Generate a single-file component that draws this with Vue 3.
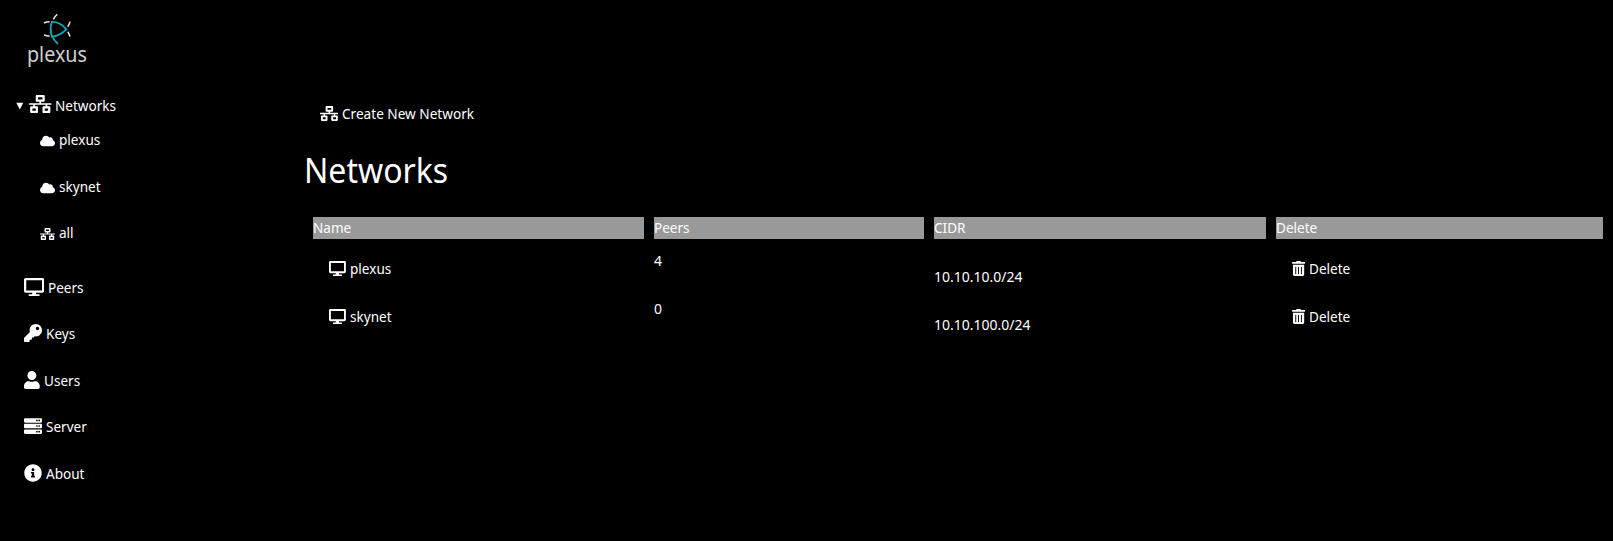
<script setup>
import { h } from 'vue'

const server = [32, 192, 352]
  .map(
    (y) =>
      `M480 ${y + 128}H32c-17.7 0-32-14.3-32-32v-64c0-17.7 14.3-32 32-32h448c17.7 0 32 14.3 32 32v64c0 17.7-14.3 32-32 32z` +
      `M432 ${y + 40}a24 24 0 1 0 0 48a24 24 0 1 0 0-48zM368 ${y + 40}a24 24 0 1 0 0 48a24 24 0 1 0 0-48z`
  )
  .join('')

const icons = {
  network: [640, 'M640 264v-16c0-8.84-7.16-16-16-16H344v-40h72c17.67 0 32-14.33 32-32V32c0-17.67-14.33-32-32-32H224c-17.67 0-32 14.33-32 32v128c0 17.67 14.33 32 32 32h72v40H16c-8.84 0-16 7.16-16 16v16c0 8.84 7.16 16 16 16h104v40H64c-17.67 0-32 14.33-32 32v128c0 17.67 14.33 32 32 32h160c17.67 0 32-14.33 32-32V352c0-17.67-14.33-32-32-32h-56v-40h304v40h-56c-17.67 0-32 14.33-32 32v128c0 17.67 14.33 32 32 32h160c17.67 0 32-14.33 32-32V352c0-17.67-14.33-32-32-32h-56v-40h104c8.84 0 16-7.16 16-16zM256 128V64h128v64H256zm-64 320H96v-64h96v64zm352 0h-96v-64h96v64z'],
  desktop: [576, 'M528 0H48C21.5 0 0 21.5 0 48v320c0 26.5 21.5 48 48 48h192l-16 48h-72c-13.3 0-24 10.7-24 24s10.7 24 24 24h272c13.3 0 24-10.7 24-24s-10.7-24-24-24h-72l-16-48h192c26.5 0 48-21.5 48-48V48c0-26.5-21.5-48-48-48zm-16 352H64V64h448v288z'],
  key: [512, 'M512 176C512 273.2 433.2 352 336 352c-11.2 0-22.2-1.1-32.8-3.1l-24 27A24 24 0 0 1 261.2 384H224v40c0 13.3-10.7 24-24 24h-40v40c0 13.3-10.7 24-24 24H24c-13.3 0-24-10.7-24-24v-78.1c0-6.4 2.5-12.4 7-17l161.8-161.8C163.1 213.8 160 195.3 160 176 160 78.8 238.8 0 336 0 433.5 0 512 78.5 512 176zM336 128c0 26.5 21.5 48 48 48s48-21.5 48-48-21.5-48-48-48-48 21.5-48 48z'],
  user: [448, 'M224 256c70.7 0 128-57.3 128-128S294.7 0 224 0 96 57.3 96 128s57.3 128 128 128zm89.6 32h-16.7c-22.2 10.2-46.9 16-72.9 16s-50.6-5.8-72.9-16h-16.7C60.2 288 0 348.2 0 422.4V464c0 26.5 21.5 48 48 48h352c26.5 0 48-21.5 48-48v-41.6c0-74.2-60.2-134.4-134.4-134.4z'],
  server: [512, server],
  info: [512, 'M256 8C119 8 8 119.1 8 256c0 137 111 248 248 248s248-111 248-248C504 119.1 393 8 256 8zm0 110c23.2 0 42 18.8 42 42s-18.8 42-42 42-42-18.8-42-42 18.8-42 42-42zm56 254c0 6.6-5.4 12-12 12h-88c-6.6 0-12-5.4-12-12v-24c0-6.6 5.4-12 12-12h12v-64h-12c-6.6 0-12-5.4-12-12v-24c0-6.6 5.4-12 12-12h64c6.6 0 12 5.4 12 12v100h12c6.6 0 12 5.4 12 12v24z'],
  cloud: [640, 'M537.6 226.6c4.1-10.7 6.4-22.4 6.4-34.6 0-53-43-96-96-96-19.7 0-38.1 6-53.3 16.2C367 64.2 315.3 32 256 32c-88.4 0-160 71.6-160 160 0 2.7.1 5.4.2 8.1C40.2 219.8 0 273.2 0 336c0 79.5 64.5 144 144 144h368c70.7 0 128-57.3 128-128 0-61.9-44-113.6-102.4-125.4z'],
  trash: [448, 'M32 464a48 48 0 0 0 48 48h288a48 48 0 0 0 48-48V128H32zm272-256a16 16 0 0 1 32 0v224a16 16 0 0 1-32 0zm-96 0a16 16 0 0 1 32 0v224a16 16 0 0 1-32 0zm-96 0a16 16 0 0 1 32 0v224a16 16 0 0 1-32 0zM432 32H312l-9.4-18.7A24 24 0 0 0 281.1 0H166.8a23.7 23.7 0 0 0-21.4 13.3L136 32H16A16 16 0 0 0 0 48v32a16 16 0 0 0 16 16h416a16 16 0 0 0 16-16V48a16 16 0 0 0-16-16z']
}

const Icon = ({ name, size }) =>
  h(
    'svg',
    { viewBox: `0 0 ${icons[name][0]} 512`, width: (icons[name][0] / 512) * size, height: size, fill: 'currentColor' },
    [h('path', { d: icons[name][1], 'fill-rule': 'evenodd' })]
  )
Icon.props = ['name', 'size']

const subnets = [
  { label: 'plexus', icon: 'cloud' },
  { label: 'skynet', icon: 'cloud' },
  { label: 'all', icon: 'network' }
]
const menu = [
  { label: 'Peers', icon: 'desktop' },
  { label: 'Keys', icon: 'key' },
  { label: 'Users', icon: 'user' },
  { label: 'Server', icon: 'server' },
  { label: 'About', icon: 'info' }
]
const networks = [
  { name: 'plexus', peers: 4, cidr: '10.10.10.0/24' },
  { name: 'skynet', peers: 0, cidr: '10.10.100.0/24' }
]
const columns = ['Name', 'Peers', 'CIDR', 'Delete']
</script>

<template>
  <div class="page">
    <aside class="sidebar">
      <div class="logo">
        <svg class="mark" viewBox="0 0 84 96" width="28" height="32" fill="none">
          <g stroke="#10aabb" stroke-width="5.5" stroke-linecap="round">
            <path d="M27 26Q52 27 70 49Q52 68 27 71Q19 48 27 26" />
            <path d="M28 70Q32 82 43 91" />
          </g>
          <g stroke="#e4e4dc" stroke-width="4.5">
            <path d="M31 19Q35 10 43 4" />
            <path d="M3 30Q10 26 20 26" />
            <path d="M3 66Q10 69 20 70" />
            <path d="M74 41Q79 35 81 26" />
            <path d="M74 56Q79 62 81 71" />
          </g>
        </svg>
        <span class="wordmark">plexus</span>
      </div>

      <div class="row summary">
        <svg class="caret" viewBox="0 0 8 8" width="8" height="8"><path d="M.3.7H7.3L3.8 7.5z" fill="#fff" /></svg>
        <Icon name="network" :size="18" />
        <span class="text">Networks</span>
      </div>
      <nav class="subnav">
        <a v-for="s in subnets" :key="s.label" class="row">
          <Icon :name="s.icon" :size="12" /><span class="text">{{ s.label }}</span>
        </a>
      </nav>
      <nav class="menu">
        <a v-for="m in menu" :key="m.label" class="row">
          <Icon :name="m.icon" :size="18" /><span class="text">{{ m.label }}</span>
        </a>
      </nav>
    </aside>

    <main class="content">
      <a class="row create"><Icon name="network" :size="15" /><span class="text">Create New Network</span></a>
      <h1><span class="text">Networks</span></h1>
      <div class="grid head">
        <div v-for="c in columns" :key="c" class="cell"><span class="text">{{ c }}</span></div>
      </div>
      <div v-for="n in networks" :key="n.name" class="grid line">
        <a class="row action"><Icon name="desktop" :size="15" /><span class="text">{{ n.name }}</span></a>
        <div class="peers"><span class="text">{{ n.peers }}</span></div>
        <div class="cidr"><span class="text">{{ n.cidr }}</span></div>
        <a class="row action"><Icon name="trash" :size="15" /><span class="text">Delete</span></a>
      </div>
    </main>
  </div>
</template>

<style>
body {
  margin: 0;
  background: #000;
}
</style>

<style scoped>
.page {
  display: flex;
  height: 541px;
  overflow: hidden;
  background: #000;
  color: #fff;
  font: 14.5px/22px 'Noto Sans', 'Open Sans', sans-serif;
}
.text {
  display: inline-block;
  white-space: nowrap;
  transform: scaleX(0.935);
  transform-origin: left;
}
.row {
  display: flex;
  align-items: flex-start;
  height: 22px;
  gap: 4px;
}
.row svg {
  flex: none;
  margin-top: 2px;
}
.sidebar {
  flex: none;
  width: 304px;
}
.logo {
  height: 80px;
  padding: 13px 0 0 26.5px;
  box-sizing: border-box;
}
.mark {
  display: block;
  margin-left: 16.5px;
}
.wordmark {
  display: block;
  margin-top: -5px;
  color: #d0d0d0;
  font-size: 22.5px;
  line-height: 28px;
  width: max-content;
  transform: scaleX(0.875);
  transform-origin: left;
}
.summary {
  margin-top: 14px;
  padding-left: 16px;
}
.summary svg {
  margin-top: 1px;
}
.summary .caret {
  margin: 8px 1px 0 0;
}
.summary .text {
  margin-left: -0.5px;
}
.subnav {
  display: grid;
  gap: 24.5px;
  padding: 12px 0 0 40px;
}
.subnav .row svg {
  margin-top: 7px;
}
.menu {
  display: grid;
  gap: 24.5px;
  padding: 32.6px 0 0 24px;
}
.content {
  flex: 1;
  padding-top: 102px;
}
.create {
  padding-left: 15.5px;
}
.create .text {
  margin-left: -0.5px;
  transform: scaleX(0.938);
}
.create svg {
  margin-top: 4px;
}
h1 {
  margin: 19px 0 20px;
  font-size: 35px;
  font-weight: 400;
  line-height: 54px;
}
h1 .text {
  transform: scaleX(0.915);
}
.grid {
  display: grid;
  grid-template-columns: 331px 270px 332px 327px;
  gap: 10px;
  padding-left: 9px;
}
.cell {
  display: flex;
  height: 22px;
  background: #999;
}
.cell .text {
  line-height: 20px;
}
.line {
  height: 48px;
}
.head + .line {
  margin-top: 10px;
}
.action {
  padding: 8px 0 0 16px;
}
.action svg {
  margin-top: 4px;
}
.cidr {
  padding-top: 16px;
}
.cidr .text,
.peers .text {
  transform: scaleX(0.965);
}
</style>
